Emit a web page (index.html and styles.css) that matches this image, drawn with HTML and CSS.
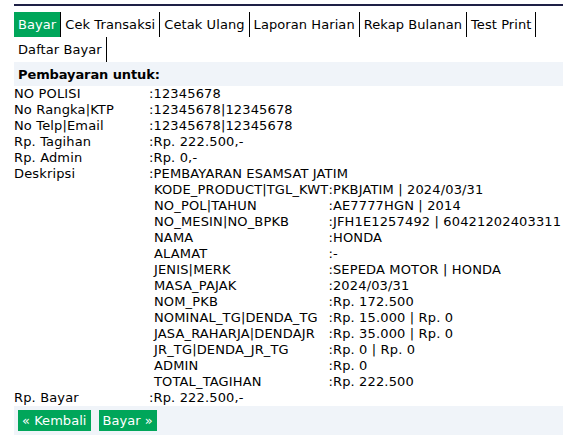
FILE: index.html
```html
<!DOCTYPE html>
<html>
<head>
<meta charset="utf-8">
<link rel="stylesheet" href="styles.css">
</head>
<body>
<div class="page">
  <div class="topline"></div>
  <nav class="tabs">
    <a class="tab active">Bayar</a>
    <a class="tab">Cek Transaksi</a>
    <a class="tab">Cetak Ulang</a>
    <a class="tab">Laporan Harian</a>
    <a class="tab">Rekap Bulanan</a>
    <a class="tab">Test Print</a>
    <a class="tab">Daftar Bayar</a>
  </nav>
  <div class="heading">Pembayaran untuk:</div>
  <table class="data">
    <tr><td class="lbl">NO POLISI</td><td>:12345678</td></tr>
    <tr><td class="lbl">No Rangka|KTP</td><td>:12345678|12345678</td></tr>
    <tr><td class="lbl">No Telp|Email</td><td>:12345678|12345678</td></tr>
    <tr><td class="lbl">Rp. Tagihan</td><td>:Rp. 222.500,-</td></tr>
    <tr><td class="lbl">Rp. Admin</td><td>:Rp. 0,-</td></tr>
    <tr><td class="lbl">Deskripsi</td><td>:PEMBAYARAN ESAMSAT JATIM
      <table class="sub">
        <tr><td>KODE_PRODUCT|TGL_KWT</td><td>:PKBJATIM | 2024/03/31</td></tr>
        <tr><td>NO_POL|TAHUN</td><td>:AE7777HGN | 2014</td></tr>
        <tr><td>NO_MESIN|NO_BPKB</td><td>:JFH1E1257492 | 60421202403311</td></tr>
        <tr><td>NAMA</td><td>:HONDA</td></tr>
        <tr><td>ALAMAT</td><td>:-</td></tr>
        <tr><td>JENIS|MERK</td><td>:SEPEDA MOTOR | HONDA</td></tr>
        <tr><td>MASA_PAJAK</td><td>:2024/03/31</td></tr>
        <tr><td>NOM_PKB</td><td>:Rp. 172.500</td></tr>
        <tr><td>NOMINAL_TG|DENDA_TG</td><td>:Rp. 15.000 | Rp. 0</td></tr>
        <tr><td>JASA_RAHARJA|DENDAJR</td><td>:Rp. 35.000 | Rp. 0</td></tr>
        <tr><td>JR_TG|DENDA_JR_TG</td><td>:Rp. 0 | Rp. 0</td></tr>
        <tr><td>ADMIN</td><td>:Rp. 0</td></tr>
        <tr><td>TOTAL_TAGIHAN</td><td>:Rp. 222.500</td></tr>
      </table>
    </td></tr>
    <tr><td class="lbl">Rp. Bayar</td><td>:Rp. 222.500,-</td></tr>
  </table>
  <div class="actions">
    <button class="btn">« Kembali</button>
    <button class="btn">Bayar »</button>
  </div>
</div>
</body>
</html>
```
FILE: styles.css
```css
html, body {
  margin: 0;
  padding: 0;
  background: #fff;
}
body {
  font-family: "DejaVu Sans", Verdana, sans-serif;
  font-size: 13px;
  letter-spacing: 0.15px;
  color: #000;
}
.page {
  margin-left: 14px;
  width: 549px;
  padding-top: 4px;
}
.topline {
  height: 2px;
  background: #1e2046;
}
.tabs {
  display: flex;
  flex-wrap: wrap;
  margin-top: 6px;
}
.tab {
  display: block;
  padding: 4px 4px;
  line-height: 17px;
  letter-spacing: 0.08px;
  border-right: 1px solid #000;
  color: #000;
  text-decoration: none;
}
.tab.active {
  background: #00a65a;
  color: #fff;
}
.heading {
  background: #f0f4f9;
  font-weight: bold;
  letter-spacing: -0.1px;
  padding: 4px 4px 0;
  height: 20px;
  line-height: 17px;
}
.data {
  border-collapse: collapse;
  border-spacing: 0;
  width: 100%;
}
.data td {
  padding: 0;
  line-height: 16px;
  vertical-align: top;
  white-space: nowrap;
}
.data td.lbl {
  width: 135px;
}
.sub {
  border-collapse: collapse;
  border-spacing: 0;
  margin-left: 5px;
}
.sub td {
  padding: 0;
  line-height: 16px;
}
.actions {
  background: #f0f4f9;
  padding: 4px 4px;
  height: 21px;
  display: flex;
  gap: 8px;
}
.btn {
  font-family: "DejaVu Sans", Verdana, sans-serif;
  font-size: 13px;
  letter-spacing: 0.05px;
  background: #00a65a;
  color: #fff;
  border: 0;
  margin: 0;
  padding: 0 4px;
  height: 21px;
  line-height: 21px;
}
```
